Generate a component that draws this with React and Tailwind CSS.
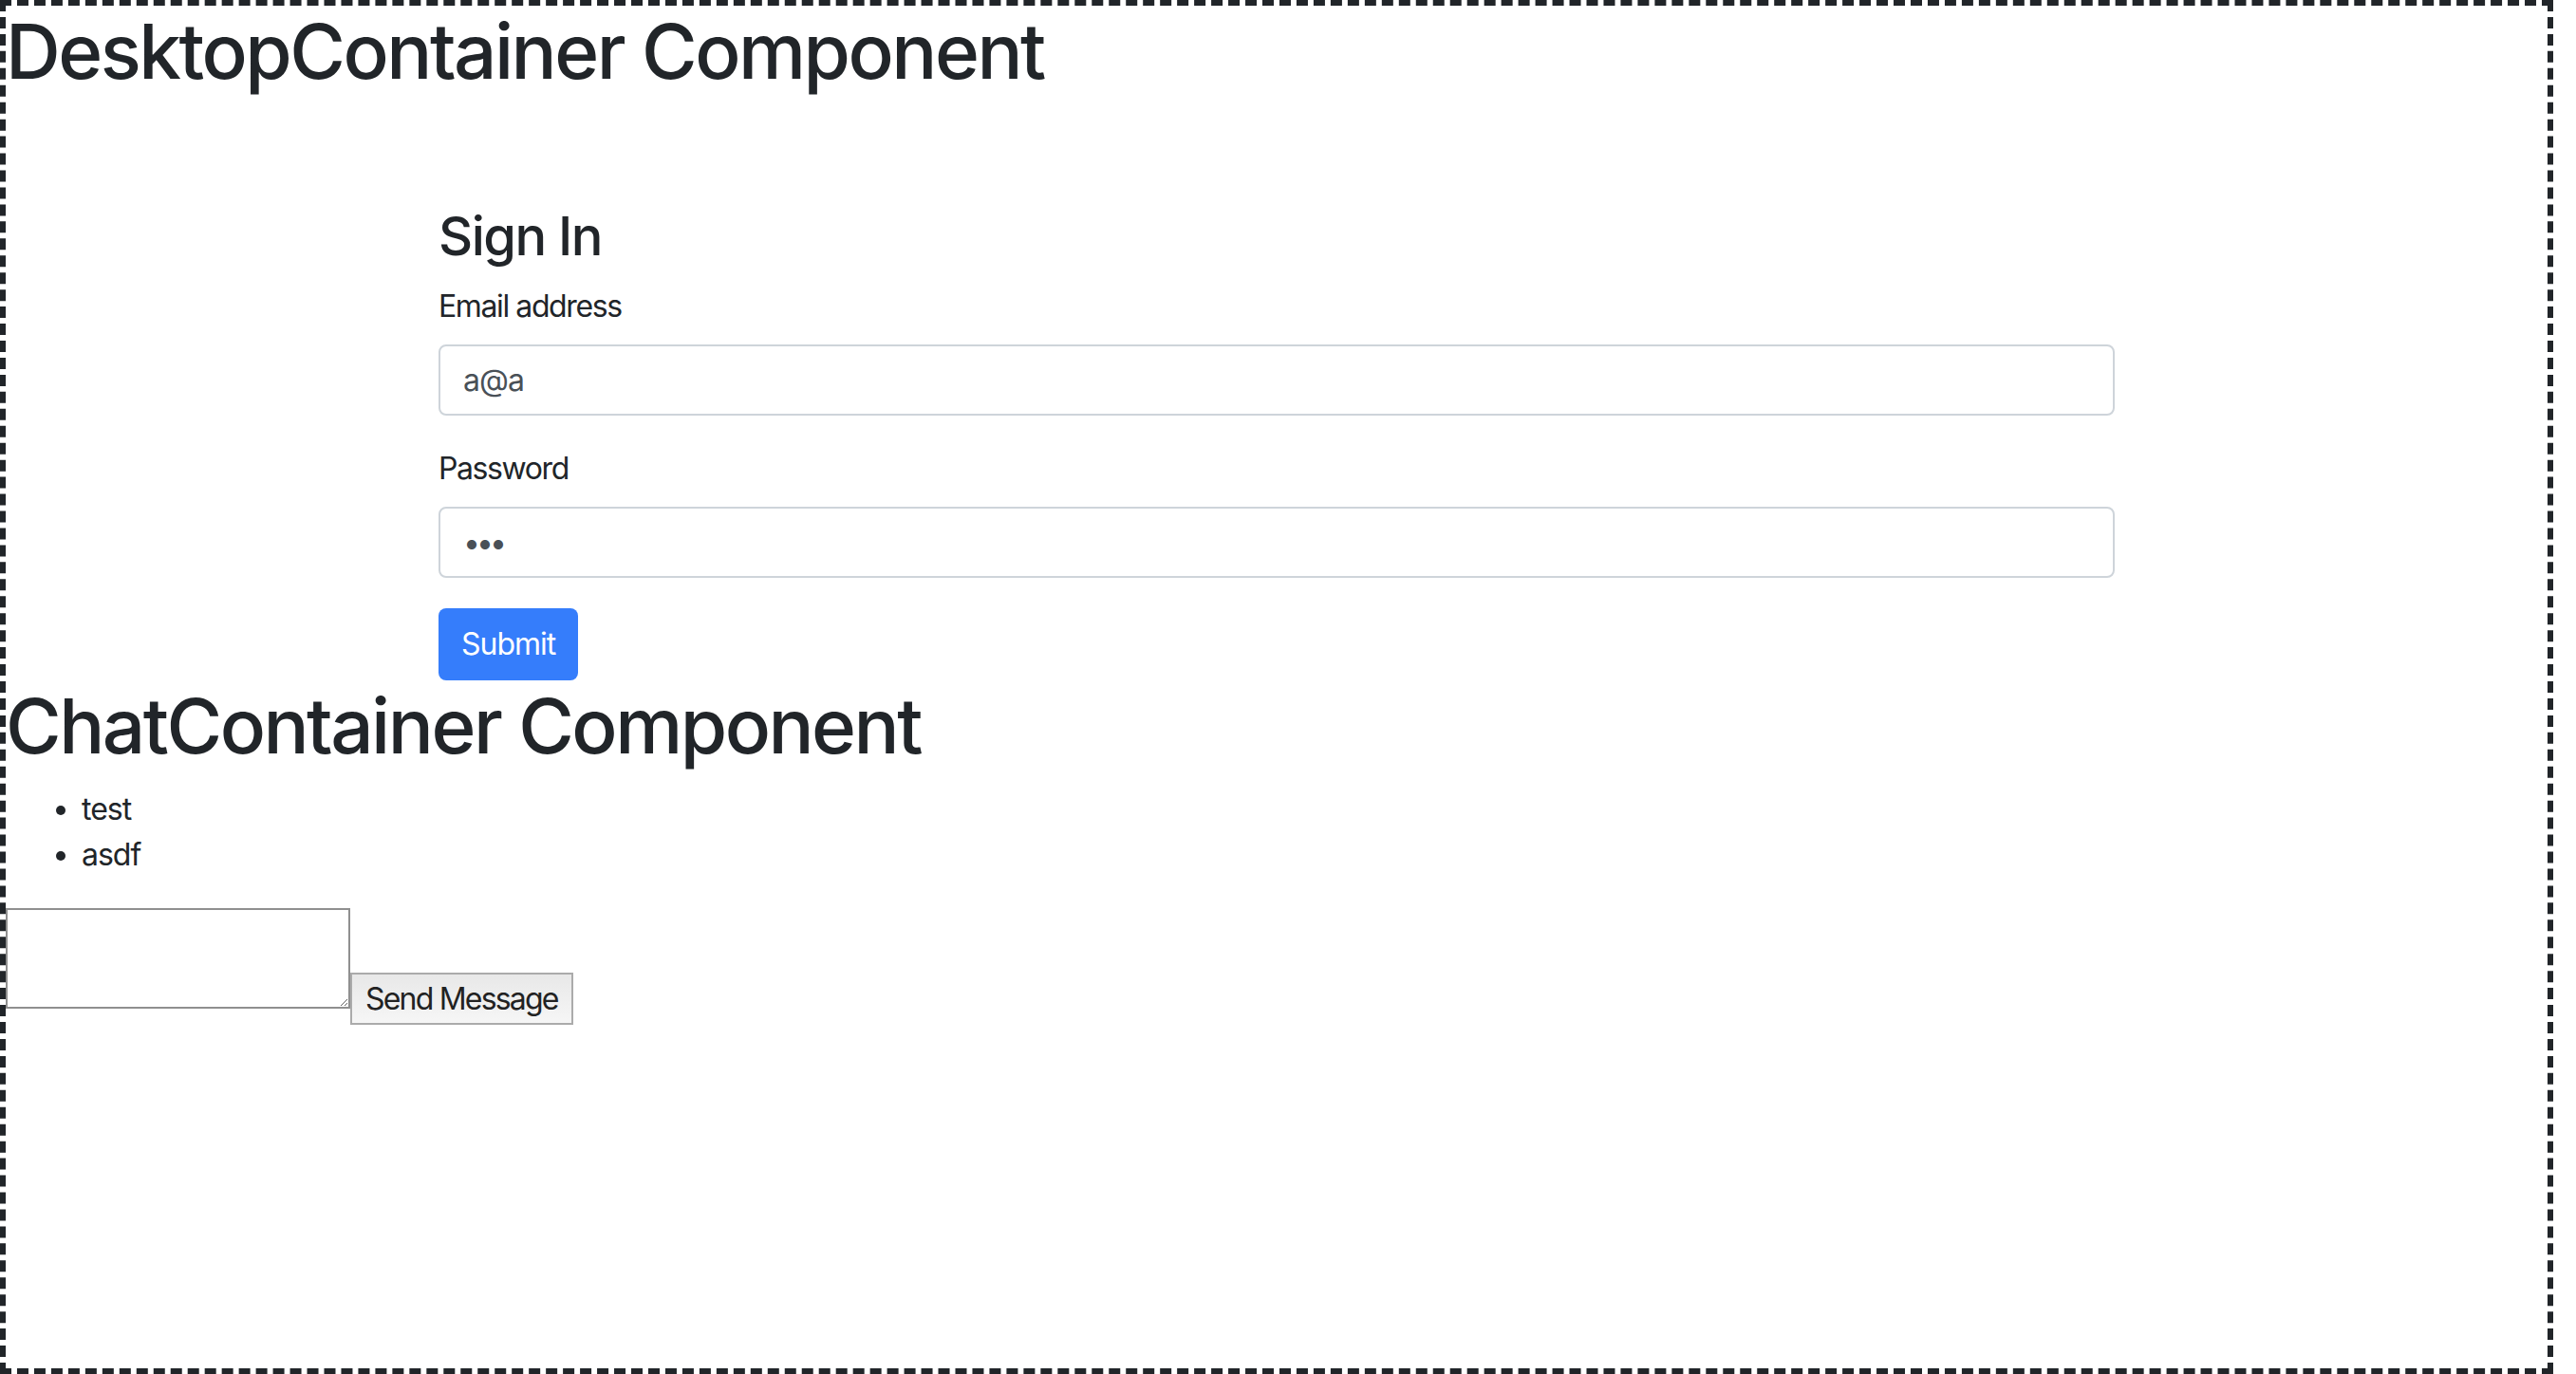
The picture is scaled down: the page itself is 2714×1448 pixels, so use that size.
import React from 'react';

const font = { fontFamily: 'Inter, "Noto Sans", sans-serif' };

function SignInForm() {
    return (
        <form className="ml-[456px] mt-[114px] w-[1766px]" onSubmit={e => e.preventDefault()}>
            <h3 className="text-[56px] leading-[67px] font-medium tracking-[-1.5px] mb-4">Sign In</h3>

            <div className="mb-8">
                <label className="block text-[32px] leading-[48px] tracking-[-1.4px] mb-4">Email address</label>
                <input
                    type="email"
                    defaultValue="a@a"
                    readOnly
                    className="block w-full h-[75px] px-6 text-[32px] tracking-[-1px] text-[#495057] bg-white border-2 border-[#ced4da] rounded-lg outline-none"
                />
            </div>

            <div className="mb-8">
                <label className="block text-[32px] leading-[48px] tracking-[-1.4px] mb-4">Password</label>
                <input
                    type="password"
                    defaultValue="aaa"
                    readOnly
                    className="block w-full h-[75px] px-6 text-[32px] tracking-[-4px] text-[#495057] bg-white border-2 border-[#ced4da] rounded-lg outline-none"
                />
            </div>

            <button type="submit" className="h-[76px] px-6 text-[32px] tracking-[-1px] text-white bg-[#357dfb] rounded-lg">
                Submit
            </button>
        </form>
    );
}

function ChatContainer() {
    const messages = ['test', 'asdf'];

    return (
        <div>
            <h1 className="text-[80px] leading-[96px] font-medium tracking-[-2.5px] mb-4">ChatContainer Component</h1>
            <ul className="list-disc pl-[80px] mb-8 text-[32px] leading-[48px] tracking-[-1px]">
                {messages.map(m => (
                    <li key={m}>{m}</li>
                ))}
            </ul>
            <div className="flex items-start">
                <textarea className="block w-[363px] h-[106px] border-2 border-[#8f8f8f] bg-white outline-none" />
                <button className="mt-[68px] h-[55px] px-[14px] flex items-center text-[32px] tracking-[-1.8px] text-[#222] border-2 border-[#ababab] bg-linear-to-b from-[#e8e8e8] to-[#f6f6f6]">
                    Send Message
                </button>
            </div>
        </div>
    );
}

export default function App() {
    return (
        <div className="bg-white min-h-screen" style={font}>
            <div className="w-[2690px] h-[1448px] border-[6px] border-dashed border-[#212529] text-[#212529] overflow-hidden">
                <h1 className="text-[80px] leading-[96px] font-medium tracking-[-2.5px] mb-4">DesktopContainer Component</h1>
                <SignInForm />
                <ChatContainer />
            </div>
        </div>
    );
}
